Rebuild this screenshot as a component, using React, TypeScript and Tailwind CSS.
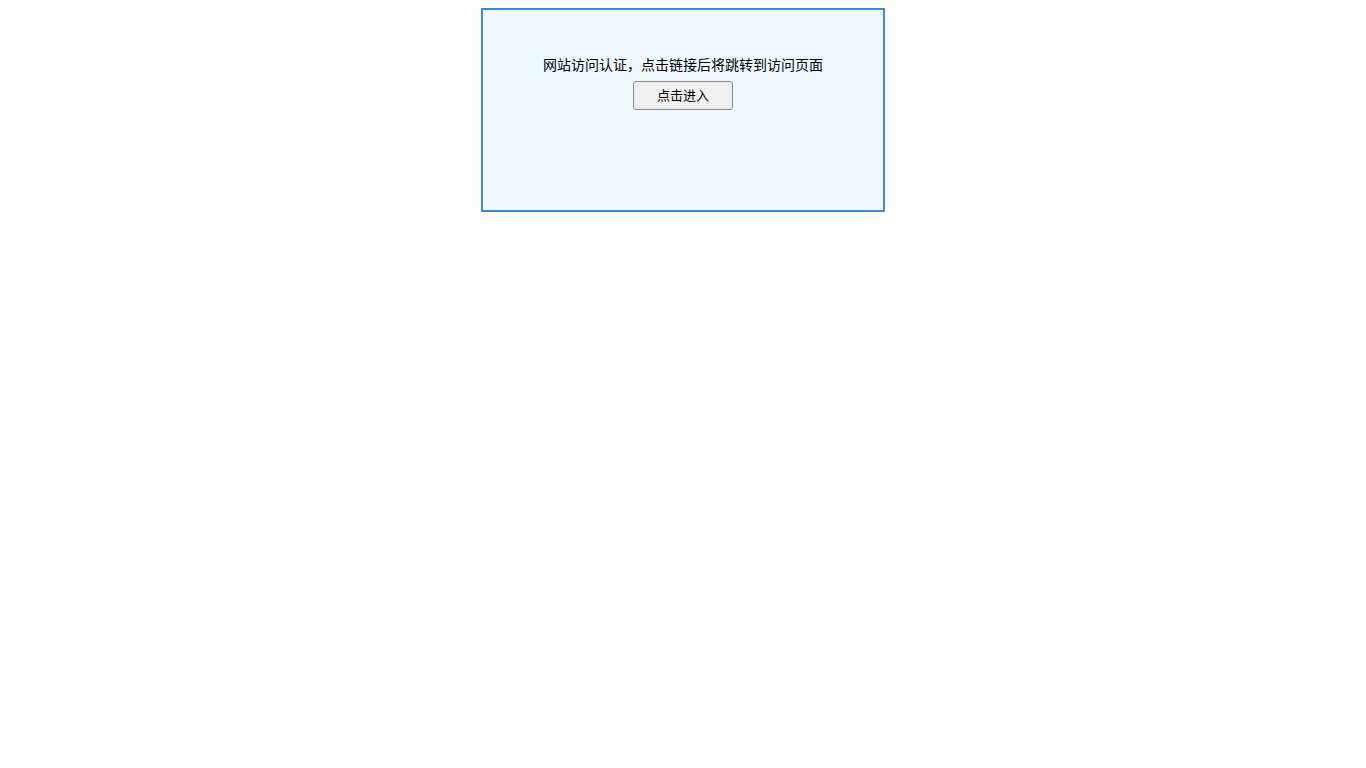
export default function App() {
  return (
    <div className="min-h-screen bg-white pt-2" style={{ fontFamily: '"Noto Sans CJK SC", "Liberation Sans", sans-serif' }}>
      <div className="mx-auto h-[204px] w-[404px] border-2 border-[#3d8bd3] bg-[#f0f8ff] pt-[44px] text-center">
        <p className="text-[14px] leading-[20px] text-black">网站访问认证，点击链接后将跳转到访问页面</p>
        <button className="mt-[7px] h-[29px] w-[100px] rounded-[3px] border border-[#8a8a8a] bg-[#efefef] pb-[2px] text-[13px] text-black">
          点击进入
        </button>
      </div>
    </div>
  )
}
